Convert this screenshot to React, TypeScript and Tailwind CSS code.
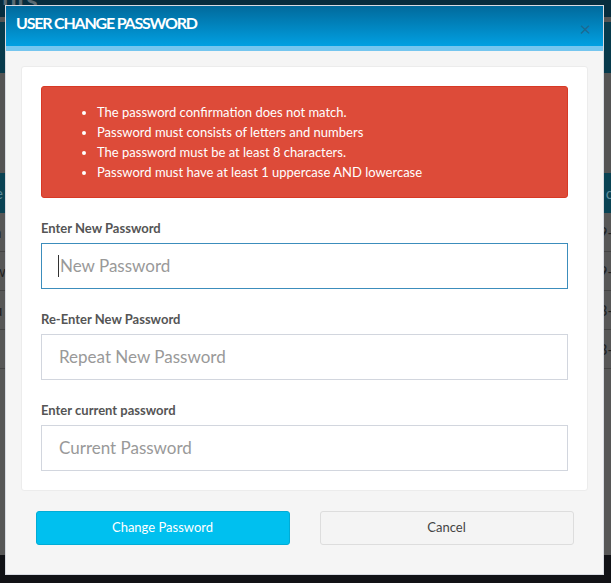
import React from "react";

const font = { fontFamily: "Lato, 'Noto Sans', sans-serif" };

function BgRow({ left, right }: { left: string; right: string }) {
  return (
    <div className="h-[39px] border-b border-[#444] flex items-center justify-between text-[15px] text-[#222]">
      <span className="-ml-[6px]">{left}</span>
      <span className="-mr-[2px]">{right}</span>
    </div>
  );
}

export default function App() {
  return (
    <div className="relative w-[611px] h-[583px] overflow-hidden bg-[#545454]" style={font}>
      {/* dimmed page behind */}
      <div className="flex flex-col h-full">
        <div className="h-[5px] bg-[#072d3e] relative overflow-hidden">
          <span className="absolute -top-[14px] left-[2px] text-[26px] leading-[26px] font-bold text-[#5a6b74]">nts</span>
        </div>
        <div className="h-[12px] bg-[#072d3e]" />
        <div className="h-[5px] bg-[#545454]" />
        <div className="h-[51px] bg-[#073a4c]" />
        <div className="h-[100px] bg-[#545454]" />
        <div className="h-[40px] bg-[#0a4354] flex items-center justify-between text-[15px] text-[#5d8a99]">
          <span className="-ml-[5px]">e</span>
          <span className="-mr-[2px]">c</span>
        </div>
        <div className="bg-[#575757]">
          <BgRow left="a" right="9-" />
          <BgRow left="w" right="9-" />
          <BgRow left="u" right="3-" />
          <BgRow left="j" right="3-" />
        </div>
        <div className="flex-1 bg-[#575757]" />
        <div className="h-[28px] bg-[#111216]" />
      </div>

      {/* modal */}
      <div className="absolute left-[5px] top-[5px] w-[599px] h-[570px] bg-[#f5f5f5] border border-[#d8dbe2] flex flex-col">
        <div className="h-[40px] bg-gradient-to-b from-[#016a9c] to-[#01a0e2] flex items-start justify-between pl-[10px] pr-[12px] shrink-0">
          <h2 className="text-white font-bold text-[16px] tracking-[-1.2px] leading-[20px] mt-[7px]">USER CHANGE PASSWORD</h2>
          <span className="text-[#1d6a93] text-[20px] leading-none mt-[12px]">×</span>
        </div>
        <div className="h-[5px] bg-[#75c6ef] shrink-0" />

        <div className="px-[15px] pt-[15px]">
          <div className="bg-white rounded-[3px] border border-[#ececec] p-[19px]">
            <div className="bg-[#dd4b39] border border-[#d73925] rounded-[3px] px-[15px] py-[15px] text-white text-[13px] leading-[20px]">
              <ul className="list-disc pl-[40px]">
                <li>The password confirmation does not match.</li>
                <li>Password must consists of letters and numbers</li>
                <li>The password must be at least 8 characters.</li>
                <li>Password must have at least 1 uppercase AND lowercase</li>
              </ul>
            </div>

            <div className="mt-[21px] flex flex-col gap-[21px]">
              <div>
                <label className="block text-[13px] font-bold text-[#555] leading-[18px] mb-[6px]">Enter New Password</label>
                <div className="h-[46px] border border-[#3c8dbc] flex items-center pl-[16px] text-[17px] text-[#999]">
                  <span className="w-px h-[22px] bg-[#333] mr-px" />
                  <span>New Password</span>
                </div>
              </div>
              <div>
                <label className="block text-[13px] font-bold text-[#555] leading-[18px] mb-[6px]">Re-Enter New Password</label>
                <div className="h-[46px] border border-[#d2d6de] flex items-center pl-[17px] text-[17px] text-[#999]">
                  Repeat New Password
                </div>
              </div>
              <div>
                <label className="block text-[13px] font-bold text-[#555] leading-[18px] mb-[6px]">Enter current password</label>
                <div className="h-[46px] border border-[#d2d6de] flex items-center pl-[17px] text-[17px] text-[#999]">
                  Current Password
                </div>
              </div>
            </div>
          </div>
        </div>

        <div className="flex justify-center gap-[30px] mt-[20px]">
          <button className="w-[254px] h-[34px] rounded-[3px] bg-[#00c0ef] border border-[#00acd6] text-white text-[13px]">
            Change Password
          </button>
          <button className="w-[254px] h-[34px] rounded-[3px] bg-[#f4f4f4] border border-[#dddddd] text-[#444] text-[13px]">
            Cancel
          </button>
        </div>
      </div>
    </div>
  );
}
